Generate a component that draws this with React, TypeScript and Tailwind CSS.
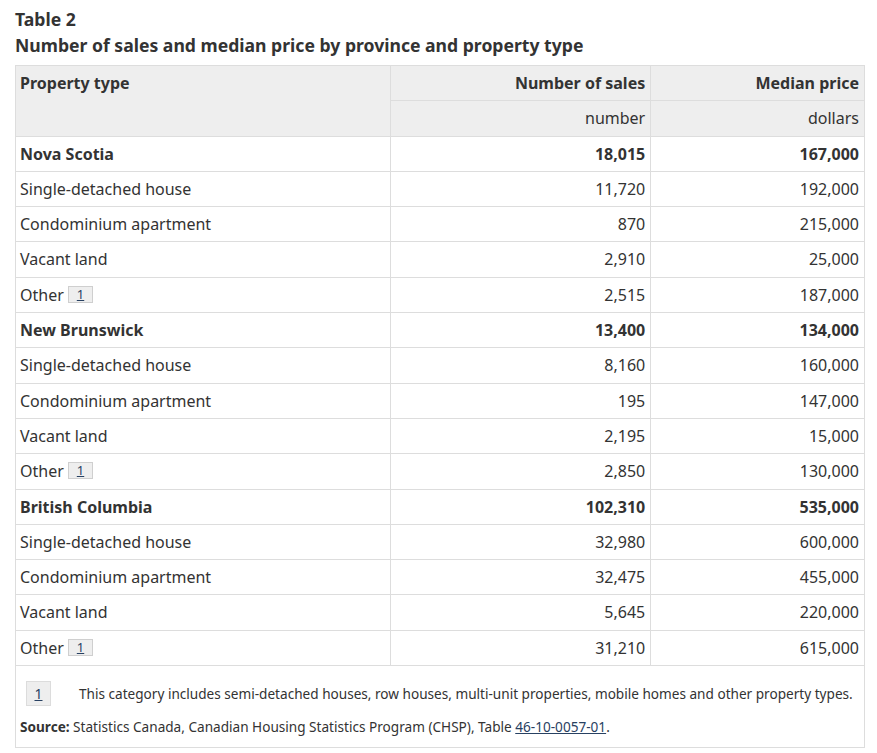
const ROWS: [string, string, string, boolean, boolean][] = [
  ["Nova Scotia", "18,015", "167,000", true, false],
  ["Single-detached house", "11,720", "192,000", false, false],
  ["Condominium apartment", "870", "215,000", false, false],
  ["Vacant land", "2,910", "25,000", false, false],
  ["Other", "2,515", "187,000", false, true],
  ["New Brunswick", "13,400", "134,000", true, false],
  ["Single-detached house", "8,160", "160,000", false, false],
  ["Condominium apartment", "195", "147,000", false, false],
  ["Vacant land", "2,195", "15,000", false, false],
  ["Other", "2,850", "130,000", false, true],
  ["British Columbia", "102,310", "535,000", true, false],
  ["Single-detached house", "32,980", "600,000", false, false],
  ["Condominium apartment", "32,475", "455,000", false, false],
  ["Vacant land", "5,645", "220,000", false, false],
  ["Other", "31,210", "615,000", false, true],
];

function FootnoteRef() {
  return (
    <sup className="relative top-[-2px] ml-[4px] inline-block h-[17px] border border-[#cfcfcf] bg-[#eeeeee] px-[8px] align-middle text-[13px] leading-[15px]">
      <a href="#fn1" className="text-[#284162] underline">
        1
      </a>
    </sup>
  );
}

export default function App() {
  return (
    <div className="min-h-screen bg-white px-[15px] pt-[6px] font-['Noto_Sans',sans-serif] text-[#333333]">
      <h2 className="text-[17.6px] leading-[26px] font-bold">Table 2</h2>
      <p className="mb-[6px] text-[17.6px] leading-[27px] font-bold">
        Number of sales and median price by province and property type
      </p>

      <table className="w-[850px] border-collapse border border-[#dddddd] text-[16px] leading-[22.3px]">
        <colgroup>
          <col className="w-[375px]" />
          <col className="w-[261px]" />
          <col className="w-[214px]" />
        </colgroup>
        <thead className="bg-[#eeeeee]">
          <tr>
            <th
              rowSpan={2}
              className="border border-[#dddddd] px-[4px] py-[6px] text-left align-top font-bold"
            >
              Property type
            </th>
            <th className="border border-[#dddddd] px-[5px] py-[6px] text-right font-bold">
              Number of sales
            </th>
            <th className="border border-[#dddddd] px-[5px] py-[6px] text-right font-bold">
              Median price
            </th>
          </tr>
          <tr>
            <td className="border border-[#dddddd] px-[5px] py-[6px] text-right">number</td>
            <td className="border border-[#dddddd] px-[5px] py-[6px] text-right">dollars</td>
          </tr>
        </thead>
        <tbody>
          {ROWS.map(([name, sales, price, bold, note], i) => (
            <tr key={i}>
              <th
                className={
                  "border border-[#dddddd] px-[4px] py-[6px] text-left " +
                  (bold ? "font-bold" : "font-normal")
                }
              >
                {name}
                {note && <FootnoteRef />}
              </th>
              <td
                className={
                  "border border-[#dddddd] px-[5px] py-[6px] text-right " +
                  (bold ? "font-bold" : "")
                }
              >
                {sales}
              </td>
              <td
                className={
                  "border border-[#dddddd] px-[5px] py-[6px] text-right " +
                  (bold ? "font-bold" : "")
                }
              >
                {price}
              </td>
            </tr>
          ))}
        </tbody>
        <tfoot>
          <tr>
            <td colSpan={3} className="border border-[#dddddd] px-[4px] pt-[15px] pb-[10px] text-[13.6px] leading-[20px]">
              <div id="fn1" className="flex items-center">
                <span className="ml-[6px] flex h-[25px] w-[25px] items-center justify-center border border-[#dcdcdc] bg-[#eeeeee] text-[14px]">
                  <a href="#" className="text-[#284162] underline">
                    1
                  </a>
                </span>
                <p className="ml-[28px]">
                  This category includes semi-detached houses, row houses, multi-unit properties,
                  mobile homes and other property types.
                </p>
              </div>
              <p className="mt-[11px]">
                <strong>Source:</strong> Statistics Canada, Canadian Housing Statistics Program
                (CHSP), Table{" "}
                <a href="#" className="text-[#284162] underline">
                  46-10-0057-01
                </a>
                .
              </p>
            </td>
          </tr>
        </tfoot>
      </table>
    </div>
  );
}
